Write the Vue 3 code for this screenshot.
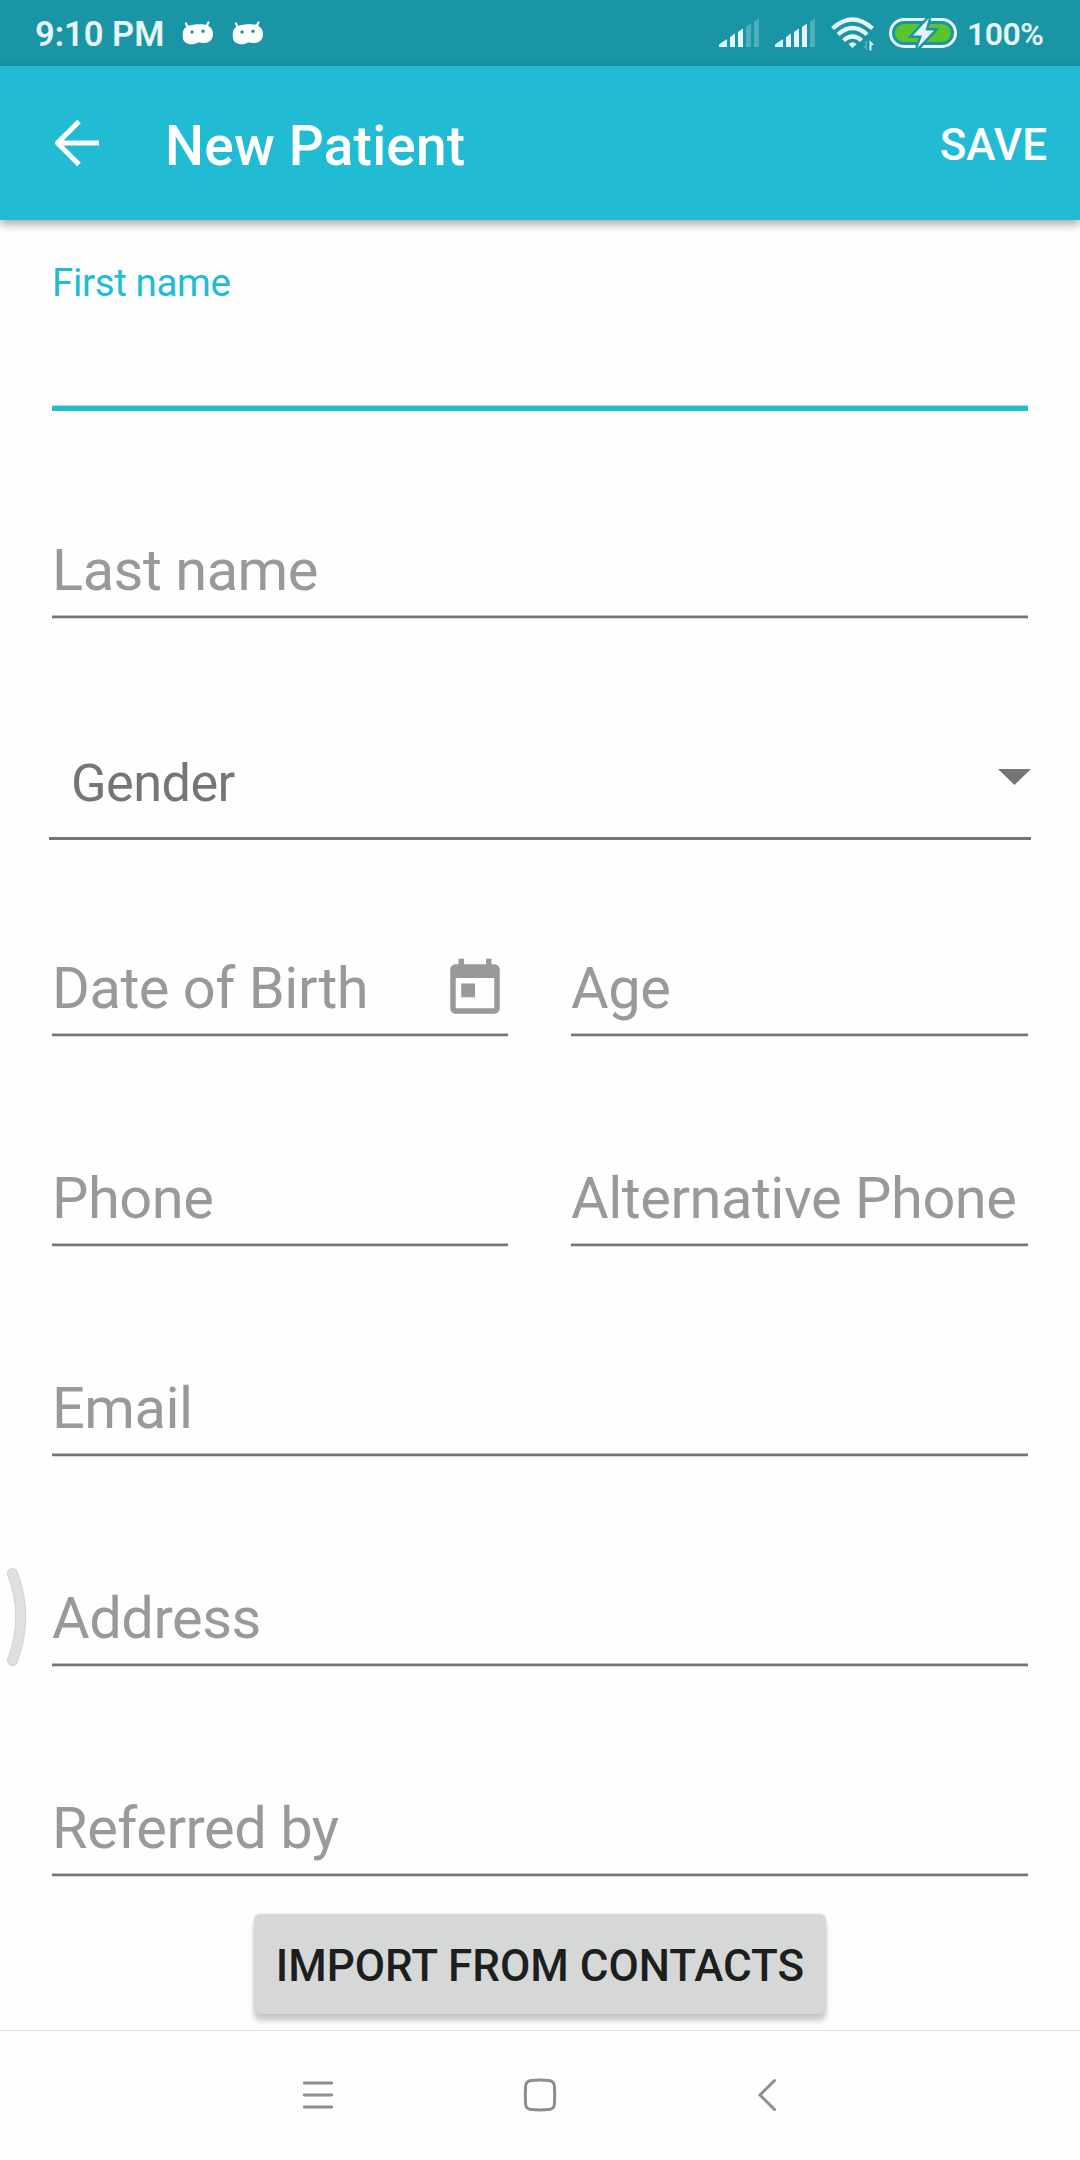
<script setup>
const rows = [
  [{ label: 'Date of Birth', icon: true }, { label: 'Age' }],
  [{ label: 'Phone' }, { label: 'Alternative Phone' }],
  [{ label: 'Email' }],
  [{ label: 'Address' }],
  [{ label: 'Referred by' }],
]
const signals = [3, 4]
const bars = [
  'M0 28V25.5L8 20V28Z',
  'M11 28V18L16 14.5V28Z',
  'M19 28V13L24 9.5V28Z',
  'M27 28V8L32 4.5V28Z',
  'M35 28V3L40 -.5V28Z',
]
</script>

<template>
  <div class="screen">
    <header class="status">
      <span class="time">9:10 PM</span>
      <svg v-for="n in 2" :key="n" class="droid" viewBox="0 0 32 24" width="32" height="24">
        <path d="M4 2.500L6 7M26.500 1.500L24 6" stroke="#fff" stroke-width="2.200" stroke-linecap="round" />
        <path d="M6 5C10 3 21 2.500 25 4C29 6 31 9 31 13C31 19 27 22 22 22C18 22 18 21 15 22C12 23.500 7 24 3.500 21.500C1 20 .5 16 .8 12C1 8.500 3 6.500 6 5Z" fill="#fff" />
        <circle cx="10" cy="11" r="1.700" fill="#1995a6" />
        <circle cx="21" cy="10.200" r="1.700" fill="#1995a6" />
      </svg>
      <span class="spacer"></span>
      <svg v-for="s in signals" :key="s" class="signal" viewBox="0 -1 40 29" width="40" height="29">
        <path v-for="(d, i) in bars" :key="i" :d="d" fill="#e6f6f8" :opacity="i < s ? 1 : 0.27" />
      </svg>
      <svg class="wifi" viewBox="0 0 44 34" width="44" height="34">
        <g fill="none" stroke="#e6f6f8" stroke-width="4.300">
          <path d="M1.500 11.500Q21.500 -6.500 41.500 11.500" />
          <path d="M7 17.500Q21.500 4.500 36 17.500" />
          <path d="M12.500 23.500Q21.500 15.500 30.500 23.500" />
        </g>
        <path d="M17.500 27Q21.500 23.500 25.500 27L21.500 31Z" fill="#e6f6f8" />
        <path d="M36 24V33.500L32 29H34.500V24Z" fill="#e6f6f8" opacity=".3" />
        <path d="M38.500 33.500V23L43 28H40.500V33.500Z" fill="#e6f6f8" />
      </svg>
      <svg class="battery" viewBox="0 0 68 32" width="68" height="32">
        <rect x="1.500" y="2.500" width="65" height="27" rx="13.500" fill="none" stroke="#e6f6f8" stroke-width="3" />
        <rect x="6" y="7" width="56" height="18" rx="9" fill="#5bc42b" />
        <path d="M40 1L24 18.500H33L28.500 31L45 13.500H36.500Z" fill="#e6f6f8" stroke="#1995a6" stroke-width="5" paint-order="stroke" />
      </svg>
      <span class="percent">100%</span>
    </header>

    <div class="appbar">
      <svg class="back" viewBox="0 0 44 46" width="44" height="46">
        <path d="M24 1.500L2.500 23L24 44.500M3 23H44" fill="none" stroke="#fff" stroke-width="5" />
      </svg>
      <h1>New Patient</h1>
      <span class="save">SAVE</span>
    </div>

    <main class="form">
      <div class="active">
        <label>First name</label>
        <div class="focus-line"></div>
      </div>
      <div class="field last">
        <label>Last name</label>
        <div class="line"></div>
      </div>
      <div class="select">
        <span>Gender</span>
        <svg viewBox="0 0 33 16" width="33" height="16"><path d="M0 0H33L16.500 16Z" fill="#757575" /></svg>
      </div>
      <div v-for="(row, i) in rows" :key="i" class="row">
        <div v-for="f in row" :key="f.label" class="field">
          <div class="field-head">
            <label>{{ f.label }}</label>
            <svg v-if="f.icon" class="calendar" viewBox="0 0 24 24" width="66" height="66">
              <path fill="#999" d="M19 3h-1V1h-2v2H8V1H6v2H5c-1.110 0-1.990.9-1.990 2L3 19c0 1.100.89 2 2 2h14c1.100 0 2-.9 2-2V5c0-1.100-.9-2-2-2zm0 16H5V8h14v11zM7 10h5v5H7z" />
            </svg>
          </div>
          <div class="line"></div>
        </div>
      </div>
      <button class="import">IMPORT FROM CONTACTS</button>
    </main>

    <nav class="nav">
      <svg viewBox="0 0 32 34" width="32" height="34">
        <path d="M2.300 5H29.700M2.300 17H29.700M2.300 29H29.700" stroke="#8e8e8e" stroke-width="2.800" stroke-linecap="round" />
      </svg>
      <svg class="home" viewBox="0 0 34 34" width="34" height="34">
        <path d="M8 2.500Q17 1.700 26 2.500Q31 3 31.400 8Q32 17 31.400 26Q31 31 26 31.500Q17 32.300 8 31.500Q3 31 2.600 26Q2 17 2.600 8Q3 3 8 2.500Z" fill="none" stroke="#8e8e8e" stroke-width="3" />
      </svg>
      <svg viewBox="0 0 20 34" width="20" height="34">
        <path d="M17.500 2.500L3 17L17.500 31.500" fill="none" stroke="#8e8e8e" stroke-width="3" stroke-linecap="round" />
      </svg>
    </nav>

    <svg class="edge-handle" viewBox="0 0 22 100" width="22" height="100">
      <path d="M6.500 6.500Q23 50 6.500 93.500" fill="none" stroke="#d2d2d2" stroke-width="11" stroke-linecap="round" />
      <path d="M6.500 6.500Q23 50 6.500 93.500" fill="none" stroke="#e0e0e0" stroke-width="9" stroke-linecap="round" />
    </svg>
  </div>
</template>

<style>
body {
  margin: 0;
  background: #fefefe;
}
</style>

<style scoped>
.screen {
  position: relative;
  display: flex;
  flex-direction: column;
  width: 1080px;
  height: 2160px;
  overflow: hidden;
  background: #fefefe;
  font-family: Roboto, "Liberation Sans", sans-serif;
}
svg {
  display: block;
  flex: none;
}
.status {
  display: flex;
  height: 66px;
  box-sizing: border-box;
  padding: 0 36px 0 35px;
  align-items: flex-start;
  background: #1995a6;
  color: #e6f6f8;
  white-space: nowrap;
}
.time {
  width: 130px;
  margin-top: 14px;
  font-size: 34.5px;
  line-height: 40px;
  font-weight: 600;
}
.droid {
  margin: 21px 0 0 17px;
}
.droid + .droid {
  margin-left: 18px;
}
.spacer {
  flex: 1;
}
.signal {
  margin: 18px 16px 0 0;
}
.wifi {
  margin: 17px 14px 0 0;
}
.battery {
  margin: 17px 10px 0 0;
}
.percent {
  width: 77px;
  margin-top: 15px;
  font-size: 32px;
  line-height: 38px;
  font-weight: 600;
  letter-spacing: -0.5px;
}
.appbar {
  position: relative;
  display: flex;
  height: 154px;
  box-sizing: border-box;
  padding: 0 33px 0 55px;
  background: #21bcd3;
  color: #fff;
  box-shadow: 0 4px 9px rgba(0, 0, 0, 0.35);
}
.back {
  margin-top: 54px;
}
h1 {
  flex: 1;
  margin: 48px 0 0 66px;
  font-size: 55px;
  line-height: 65px;
  font-weight: 500;
  letter-spacing: 0.2px;
}
.save {
  margin-top: 53px;
  font-size: 44px;
  line-height: 52px;
  font-weight: 500;
}
.form {
  display: flex;
  flex-direction: column;
  height: 1810px;
  box-sizing: border-box;
  padding: 40px 52px 0;
}
.active {
  height: 151px;
  display: flex;
  flex-direction: column;
  justify-content: space-between;
  color: #21bcd3;
  font-size: 38.5px;
  line-height: 45px;
  letter-spacing: -0.35px;
}
.focus-line {
  height: 6px;
  background: linear-gradient(#a0e1eb 1px, #21bcd3 1px);
}
.field {
  flex: 1 1 0;
  min-width: 0;
  color: #999;
  font-size: 57.75px;
  line-height: 68px;
  letter-spacing: -0.46px;
  white-space: nowrap;
}
.last {
  flex: none;
  margin-top: 125px;
}
.last label {
  display: block;
}
.field-head {
  display: flex;
  justify-content: space-between;
  height: 68px;
}
.calendar {
  margin-top: 2px;
}
.line {
  height: 4px;
  margin-top: 11px;
  background: linear-gradient(#c0c0c0 1px, #757575 1px 3px, #dcdcdc 3px);
}
.select {
  display: flex;
  justify-content: space-between;
  height: 87px;
  margin: 134px -3px 0;
  padding-left: 22px;
  box-sizing: border-box;
  border-bottom: 3px solid #757575;
  color: #757575;
  font-size: 52.25px;
  line-height: 62px;
  letter-spacing: -0.55px;
}
.select svg {
  margin-top: 16px;
}
.row {
  display: flex;
  gap: 63px;
  margin-top: 127px;
}
.row .field:first-child:not(:last-child) {
  flex: none;
  width: 456px;
}
.select + .row {
  margin-top: 114px;
}
.import {
  align-self: center;
  flex: none;
  width: 572px;
  height: 100px;
  margin-top: 37px;
  padding: 4px 0 0;
  border: 0;
  border-radius: 6px;
  background: #d6d8d7;
  color: #1d1e1e;
  font-family: inherit;
  font-size: 44px;
  font-weight: 500;
  white-space: nowrap;
  box-shadow: 0 7px 5px rgba(0, 0, 0, 0.2), 0 0 3px rgba(0, 0, 0, 0.12);
}
.nav {
  display: flex;
  height: 130px;
  box-sizing: border-box;
  padding: 47px 303px 0 302px;
  justify-content: space-between;
  border-top: 1px solid #e1e1e1;
  background: #fefefe;
}
.home {
  margin-right: 12px;
}
.edge-handle {
  position: absolute;
  left: 6px;
  top: 1567px;
}
</style>
